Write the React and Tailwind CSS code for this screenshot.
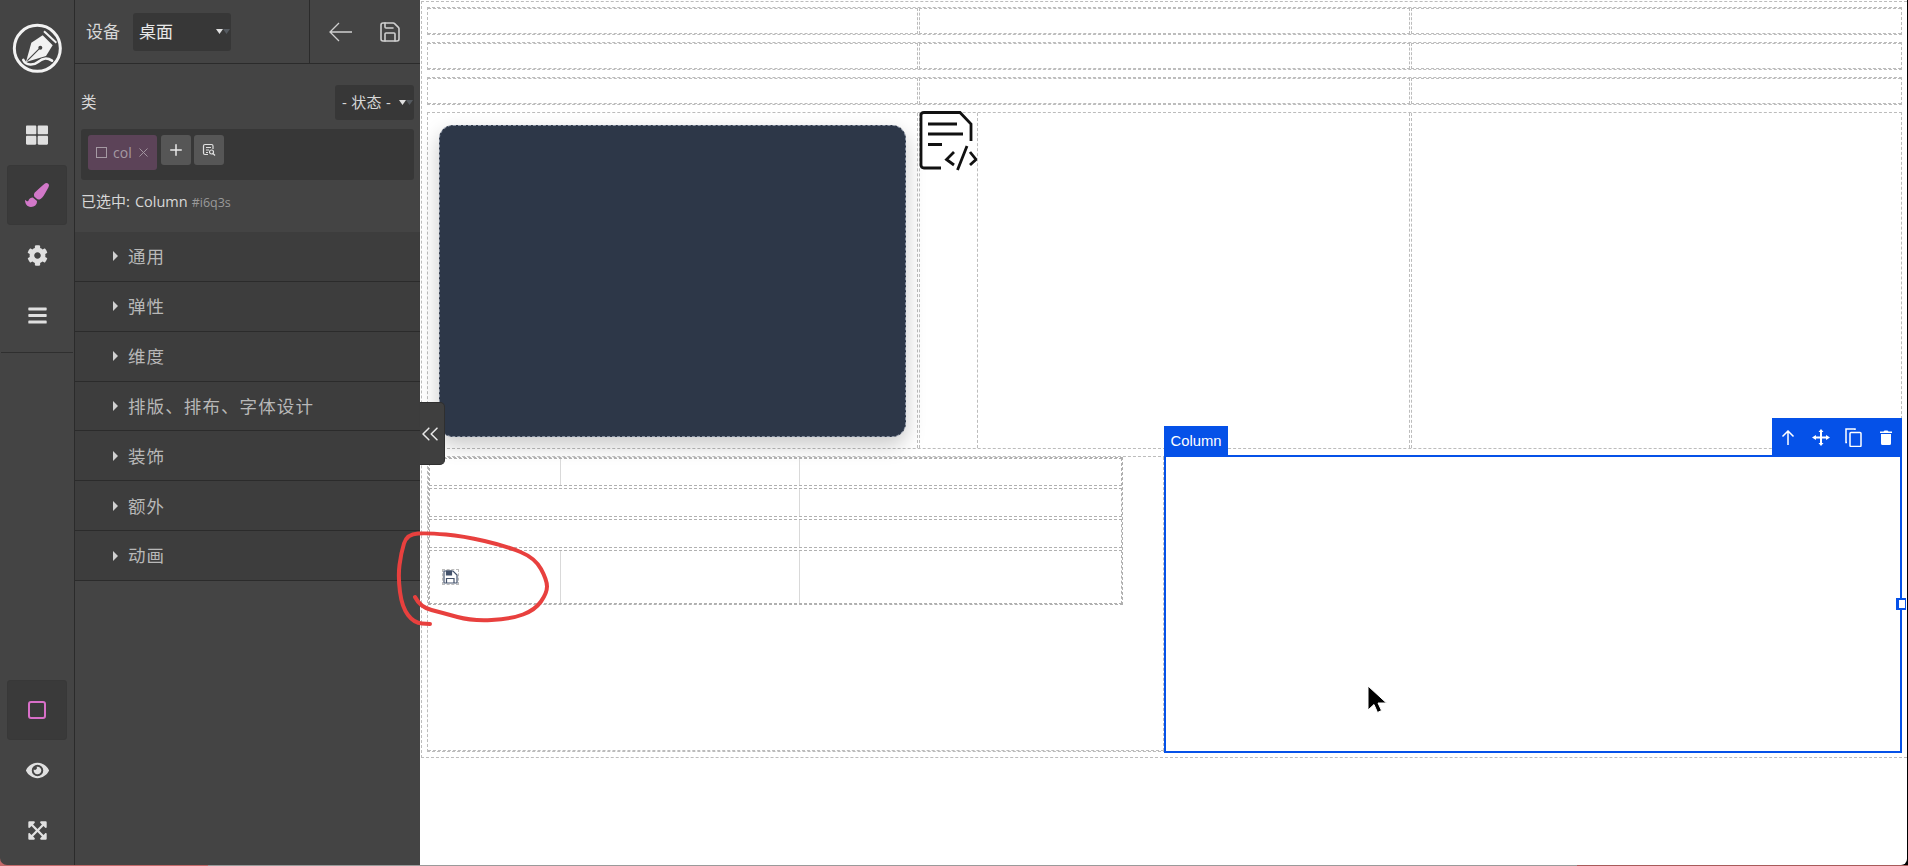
import React from "react";
import { FaThLarge, FaPaintBrush, FaCog, FaBars, FaEye, FaExpandArrowsAlt } from "react-icons/fa";
import { Plus, X, Save, ChevronsLeft } from "lucide-react";

function Logo() {
  return (
    <svg width="55" height="55" viewBox="0 0 165 165" className="block">
      <circle cx="82" cy="85" r="69" fill="none" stroke="#f2f2f2" strokeWidth="9" />
      <path d="M48 126 L64 68 L98 46 L128 76 L108 108 Z" fill="#f2f2f2" />
      <path d="M52 122 L88 86" stroke="#444" strokeWidth="3.5" />
      <circle cx="91" cy="83" r="6" fill="#444" />
      <path d="M102 34 L139 68" stroke="#f2f2f2" strokeWidth="6" />
      <path d="M40 120 C48 138 72 136 84 126 C96 116 108 110 126 122" fill="none" stroke="#f2f2f2" strokeWidth="8" strokeLinecap="round" />
    </svg>
  );
}

function Caret() {
  return (
    <svg width="15" height="6" viewBox="0 0 15 6" className="block">
      <path d="M0 0H7L3.500 5Z" fill="#e0e0e0" />
      <path d="M7 0H14L10.500 5Z" fill="#555a60" />
    </svg>
  );
}

function RailSlot({ active, children }) {
  return (
    <div className={active ? "w-[60px] h-[60px] flex items-center justify-center bg-[#3a3a3a] border border-[#383838] rounded-[3px]" : "w-[60px] h-[60px] flex items-center justify-center"}>
      {children}
    </div>
  );
}

function Rail() {
  return (
    <div className="w-[75px] h-full shrink-0 bg-[#444444] border-r border-[#2b2b2b] rounded-bl-[7px] flex flex-col items-center pt-[20px]">
      <Logo />
      <div className="mt-[30px] flex flex-col items-center">
        <RailSlot><FaThLarge size={22} color="#e0e0e0" /></RailSlot>
        <RailSlot active><FaPaintBrush size={24} color="#d278c9" /></RailSlot>
        <RailSlot><FaCog size={21} color="#e0e0e0" /></RailSlot>
        <RailSlot><FaBars size={21} color="#e0e0e0" /></RailSlot>
      </div>
      <div className="mt-[7px] w-[72px] h-[1px] bg-[#2f2f2f]" />
      <div className="mt-auto pb-[5px] flex flex-col items-center">
        <RailSlot active><div className="w-[18px] h-[18px] border-2 border-[#d86fc8] rounded-[3px]" /></RailSlot>
        <RailSlot><FaEye size={23} color="#e0e0e0" /></RailSlot>
        <RailSlot><FaExpandArrowsAlt size={21} color="#e0e0e0" /></RailSlot>
      </div>
    </div>
  );
}

const sections = ["通用", "弹性", "维度", "排版、排布、字体设计", "装饰", "额外", "动画"];

function Panel() {
  return (
    <div className="w-[345px] h-full shrink-0 bg-[#444444] flex flex-col text-[#d8d8d8] [font-family:'Open_Sans','Noto_Sans_CJK_SC',sans-serif]">
      <div className="h-[64px] shrink-0 flex border-b border-[#2b2b2b]">
        <div className="w-[235px] border-r border-[#2b2b2b] flex items-center pl-[11px]">
          <span className="w-[34px] text-[17px] whitespace-nowrap">设备</span>
          <div className="ml-[13px] w-[98px] h-[38px] bg-[#373737] rounded-[3px] flex items-center justify-between pl-[6px] pr-0">
            <span className="text-[17px] text-[#e8e8e8]">桌面</span>
            <Caret />
          </div>
        </div>
        <div className="flex-1 flex items-center pl-[19px] gap-[26px]">
          <svg width="23" height="20" viewBox="0 0 23 20" className="block" fill="none" stroke="#cfcfcf" strokeWidth="1.3">
            <path d="M23 10H1M10 1L1 10L10 19" />
          </svg>
          <Save size={24} strokeWidth={1.6} color="#cfcfcf" />
        </div>
      </div>
      <div className="h-[168px] shrink-0 px-[6px] pt-[21px] flex flex-col">
        <div className="h-[35px] flex items-center justify-between">
          <span className="text-[15.500px]">类</span>
          <div className="w-[79px] h-[35px] bg-[#373737] rounded-[3px] flex items-center justify-between pl-[7px] pr-0">
            <span className="text-[15px] tracking-[0.3px] whitespace-nowrap">- 状态 -</span>
            <Caret />
          </div>
        </div>
        <div className="mt-[9px] h-[51px] bg-[#373737] rounded-[3px] flex items-start pl-[7px] pt-[6px] gap-[4px]">
          <div className="w-[69px] h-[35px] bg-[#5c4358] rounded-[3px] flex items-center pl-[8px] text-[#a59aa3]">
            <div className="w-[11px] h-[11px] border border-[#a59aa3]" />
            <span className="ml-[6px] text-[14px] leading-none">col</span>
            <X size={15} strokeWidth={1.5} className="ml-[4px]" />
          </div>
          <div className="w-[30px] h-[30px] bg-[#565656] rounded-[3px] flex items-center justify-center">
            <Plus size={18} strokeWidth={2} color="#e8e8e8" />
          </div>
          <div className="-ml-[1px] w-[30px] h-[30px] bg-[#565656] rounded-[3px] flex items-center justify-center">
            <svg width="14" height="14" viewBox="0 0 14 14" fill="none" stroke="#e0e0e0" strokeWidth="1.200">
              <path d="M11 6V3Q11 1.500 9.500 1.500H3Q1.500 1.500 1.500 3V10Q1.500 11.500 3 11.500H6" />
              <path d="M4 4.500H9M4 7H7M4 9.500H6" />
              <circle cx="9.500" cy="9" r="2" />
              <path d="M11 10.500L13 12.500" />
            </svg>
          </div>
        </div>
        <div className="mt-[11px] flex items-baseline leading-[20px]">
          <span className="text-[15px]">已选中:</span>
          <span className="ml-[5px] text-[14.500px]">Column</span>
          <span className="ml-[4px] text-[12.500px] text-[#9a9a9a]">#i6q3s</span>
        </div>
      </div>
      <div className="shrink-0 flex flex-col">
        {sections.map((s) => (
          <div key={s} className="h-[49.860px] bg-[#3d3d3d] border-b border-[#2b2b2b] flex items-center pl-[38px] text-[#b8b8b8]">
            <div className="w-0 h-0 border-y-[5px] border-y-transparent border-l-[5px] border-l-[#d0d0d0]" />
            <span className="ml-[10px] text-[17.500px] tracking-[1.100px] whitespace-nowrap">{s}</span>
          </div>
        ))}
      </div>
    </div>
  );
}

function Cell({ className, children }) {
  return <div className={"border border-dashed border-[#bcbcbc] " + (className || "")}>{children}</div>;
}

function EmptyRow() {
  return (
    <div className="h-[28px] border border-dashed border-[#bcbcbc] grid grid-cols-3 gap-px">
      <Cell className="border-l-0" />
      <Cell />
      <Cell className="border-r-0" />
    </div>
  );
}

function FileCode() {
  return (
    <svg width="58" height="60" viewBox="0 0 58 60" fill="none" stroke="#111" strokeWidth="2.800" className="block -mt-[2px] -ml-[1px] shrink-0">
      <path d="M22 57H5Q2 57 2 54V4Q2 1.500 5 1.500H41L52 13V30" />
      <path d="M9 13H38M9 23H44M9 33.500H23" />
      <path d="M35 41L27.500 48.500L35 54M51 41L57 48.500L51 54M48 35L38.500 59" />
    </svg>
  );
}

function SmallSave() {
  return (
    <div className="ml-[12px] w-[17px] h-[16px] border border-dashed border-[#bbbbbb] flex items-center">
      <svg width="15" height="14" viewBox="0 0 15 14" fill="none" stroke="#44536c" strokeWidth="1.200" className="block">
        <path d="M1 1H10L14 5V13H1Z" />
        <path d="M3.500 1H8.500V5H3.500Z" fill="#44536c" />
        <path d="M3.500 13V8.500H11V13" />
      </svg>
    </div>
  );
}

function TableRow({ h, first }) {
  return (
    <div className={"flex border border-dashed border-[#b0b0b0] " + h}>
      <div className={first ? "w-[131px] border-r border-[#d9d9d9]" : "w-[370px] border-r border-[#d9d9d9]"} />
      {first && <div className="w-[239px] border-r border-[#d9d9d9]" />}
      <div className="flex-1" />
    </div>
  );
}

function Table() {
  return (
    <div className="w-[695px] border border-dashed border-[#b0b0b0] flex flex-col gap-[2px]">
      <TableRow h="h-[28px]" first />
      <TableRow h="h-[29px]" />
      <TableRow h="h-[29px]" />
      <div className="flex border border-dashed border-[#b0b0b0] h-[54px]">
        <div className="w-[131px] border-r border-[#d9d9d9] flex items-center"><SmallSave /></div>
        <div className="w-[239px] border-r border-[#d9d9d9]" />
        <div className="flex-1" />
      </div>
    </div>
  );
}

function Selected() {
  return (
    <div className="relative w-[738px] shrink-0 -mt-[2px] -mb-[2px] -mr-px border-2 border-[#0551e8] bg-white">
      <div className="absolute left-[-2px] top-[-31px] w-[64px] h-[30px] bg-[#0551e8] text-white text-[14.800px] flex items-center justify-center [font-family:'Liberation_Sans',sans-serif]">
        Column
      </div>
      <div className="absolute right-[-2px] top-[-39px] w-[130px] h-[38px] bg-[#0551e8] grid grid-cols-4 items-center justify-items-center">
        <svg width="14" height="15" viewBox="0 0 14 15" fill="none" stroke="#fff" strokeWidth="1.500"><path d="M7 15V1M1.500 6.500L7 1L12.500 6.500" /></svg>
        <svg width="18" height="17" viewBox="0 0 18 17" fill="#fff"><path d="M8 3H6.500L9 0L11.500 3H10V7.500H14V6L18 8.500L14 11V9.500H10V14H11.500L9 17L6.500 14H8V9.500H4V11L0 8.500L4 6V7.500H8Z" /></svg>
        <svg width="17" height="19" viewBox="0 0 17 19" fill="none" stroke="#fff" strokeWidth="1.500"><path d="M2 14.500H1V1H10V2" /><rect x="5" y="4.500" width="11" height="14" rx="1" /></svg>
        <svg width="12" height="15" viewBox="0 0 12 15" fill="#fff"><path d="M0 1.500H3.500L4.500 0.500H7.500L8.500 1.500H12V3H0ZM1 4H11V13.500Q11 15 9.500 15H2.500Q1 15 1 13.500Z" /></svg>
      </div>
      <div className="absolute right-[-6px] top-[141px] w-[10px] h-[12px] bg-white border-y-2 border-l-[3px] border-r border-[#0551e8]" />
    </div>
  );
}

function Canvas() {
  return (
    <div className="flex-1 h-full bg-black pr-[2px]">
      <div className="relative h-full bg-white rounded-br-[6px] pl-px pt-px">
        <div className="h-[757px] border-l border-y border-dashed border-[#bcbcbc] pl-[5px] pt-[5px] pr-[5px] flex flex-col gap-[7px]">
          <EmptyRow />
          <EmptyRow />
          <EmptyRow />
          <div className="h-[337px] border border-dashed border-[#bcbcbc] grid grid-cols-3 gap-px">
            <Cell className="border-l-0 border-t-0 border-b-0 pl-[11px] pt-[12px] pb-[11px]">
              <div className="h-full w-[467px] rounded-[14px] bg-[#2d3748] border border-dashed border-[#8a93a3] shadow-[0_8px_20px_rgba(0,0,0,0.22)]" />
            </Cell>
            <Cell className="border-t-0 border-b-0 flex">
              <div className="w-[58px] border-r border-dashed border-[#bcbcbc]"><FileCode /></div>
            </Cell>
            <Cell className="border-r-0 border-t-0 border-b-0" />
          </div>
          <div className="h-[296px] border border-dashed border-[#bcbcbc] flex">
            <div className="w-[736px] border-r border-b border-dashed border-[#bcbcbc]">
              <Table />
            </div>
            <Selected />
          </div>
        </div>
      </div>
    </div>
  );
}

const redPts = [[415,597],[420,607],[443,613],[472,621],[511,619],[535,610],[547,593],[547,580],[535,558],[506,546],[463,536],[429,533],[407,534],[401,553],[398,577],[402,607],[414,623],[430,624]];

function redPath() {
  const p = redPts.map(([x, y]) => [x - 390, y - 525]);
  let d = "M" + p[0][0] + " " + p[0][1];
  for (let i = 1; i < p.length - 1; i++) {
    const mx = (p[i][0] + p[i + 1][0]) / 2;
    const my = (p[i][1] + p[i + 1][1]) / 2;
    d += " Q" + p[i][0] + " " + p[i][1] + " " + mx + " " + my;
  }
  d += " L" + p[p.length - 1][0] + " " + p[p.length - 1][1];
  return d;
}

export default function App() {
  return (
    <div className="relative w-[1908px] h-[866px] overflow-hidden bg-white">
      <div className="h-[865px] flex bg-[#c46a6a]">
        <Rail />
        <Panel />
        <Canvas />
      </div>
      <div className="h-[1px] flex">
        <div className="w-[208px] bg-[#c46a6a]" />
        <div className="w-[1369px] bg-[#9a9a9a]" />
        <div className="flex-1 bg-[#a85a5a]" />
      </div>

      <div className="absolute left-[420px] top-[402px] w-[25px] h-[63px] bg-[#3f3f3f] border border-l-0 border-[#2f2f2f] rounded-r-[5px] flex items-center justify-center">
        <ChevronsLeft size={28} strokeWidth={1.3} color="#e8e8e8" className="-ml-[4px]" />
      </div>

      <svg className="absolute left-[390px] top-[525px] pointer-events-none" width="170" height="110" fill="none" stroke="#e8403e" strokeWidth="4" strokeLinecap="round" strokeLinejoin="round">
        <path d={redPath()} />
      </svg>

      <svg className="absolute left-[1367px] top-[685px] pointer-events-none" width="21" height="29" viewBox="0 0 21 29">
        <path d="M1 1V25L7 19.500L10.500 27.500L14.500 25.500L11 18H19.500Z" fill="#000" stroke="#fff" strokeWidth="1" />
      </svg>
    </div>
  );
}
